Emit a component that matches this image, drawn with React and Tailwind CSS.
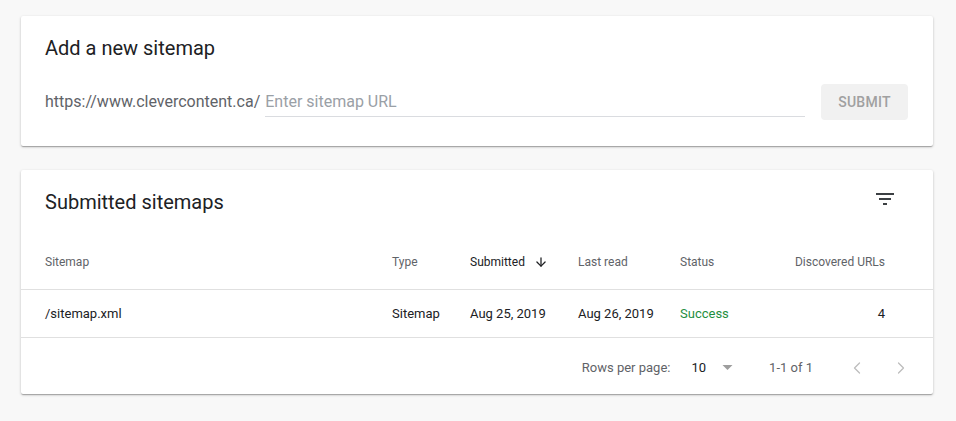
import { ArrowDown, ChevronLeft, ChevronRight } from "lucide-react";

const cardShadow =
  "shadow-[0_1px_3px_0_rgba(0,0,0,0.2),0_1px_1px_0_rgba(0,0,0,0.14),0_2px_1px_-1px_rgba(0,0,0,0.12)]";

export default function App() {
  return (
    <div className="min-h-screen bg-[#f8f8f8] pt-[16px] pb-[26px] font-['Roboto',sans-serif]">
      {/* Add sitemap */}
      <div className={`ml-[21px] w-[912px] rounded-[2px] bg-white ${cardShadow}`}>
        <div className="px-[24px] pt-[18px] pb-[26px]">
          <h2 className="text-[20px] leading-[28px] text-[#202124]">Add a new sitemap</h2>
          <div className="mt-[22px] flex h-[36px] items-center pr-[1px]">
            <span className="text-[16px] leading-[24px] text-[#5f6368]">
              https://www.clevercontent.ca/
            </span>
            <div className="ml-[5px] flex h-[30px] flex-1 items-center border-b border-[#dadce0] pt-[1px]">
              <input
                type="text"
                placeholder="Enter sitemap URL"
                className="w-full bg-transparent text-[16px] leading-[24px] text-[#202124] outline-none placeholder:text-[#9aa0a6]"
              />
            </div>
            <button className="ml-[16px] h-[36px] w-[87px] rounded-[4px] bg-[#f1f1f1] text-[14px] font-medium tracking-[0.25px] text-[#a0a0a0]">
              SUBMIT
            </button>
          </div>
        </div>
      </div>

      {/* Submitted sitemaps */}
      <div className={`ml-[21px] mt-[24px] w-[912px] rounded-[2px] bg-white ${cardShadow}`}>
        <div className="flex h-[64px] items-center justify-between pl-[24px] pr-[36px]">
          <h2 className="text-[20px] leading-[28px] text-[#202124]">Submitted sitemaps</h2>
          <svg viewBox="0 0 24 24" className="-mt-[6px] h-[24px] w-[24px] fill-[#3c4043]">
            <path d="M10 18h4v-2h-4v2zM3 6v2h18V6H3zm3 7h12v-2H6v2z" />
          </svg>
        </div>

        <div className="grid h-[56px] grid-cols-[347px_78px_108px_102px_1fr_auto] items-center border-b border-[#e0e0e0] pl-[24px] pr-[48px] text-[12px] text-[#5f6368]">
          <span>Sitemap</span>
          <span>Type</span>
          <span className="flex items-center gap-[9px] text-[#202124]">
            Submitted
            <ArrowDown size={14} strokeWidth={2.2} className="text-[#202124]" />
          </span>
          <span>Last read</span>
          <span>Status</span>
          <span className="text-right">Discovered URLs</span>
        </div>

        <div className="grid h-[48px] grid-cols-[347px_78px_108px_102px_1fr_auto] items-center border-b border-[#e0e0e0] pl-[24px] pr-[48px] text-[13px] text-[#202124]">
          <span>/sitemap.xml</span>
          <span>Sitemap</span>
          <span>Aug 25, 2019</span>
          <span>Aug 26, 2019</span>
          <span className="text-[#1e8e3e]">Success</span>
          <span className="text-right">4</span>
        </div>

        <div className="flex h-[56px] items-center justify-end pt-[3px] pr-[22px] text-[13px] text-[#5f6368]">
          <span>Rows per page:</span>
          <span className="ml-[21px] text-[#202124]">10</span>
          <svg viewBox="0 0 10 5" className="ml-[16px] h-[5px] w-[11px] fill-[#9e9e9e]">
            <path d="M0 0h10L5 5z" />
          </svg>
          <span className="ml-[36px]">1-1 of 1</span>
          <ChevronLeft size={20} strokeWidth={1.5} className="ml-[34px] text-[#bdbdbd]" />
          <ChevronRight size={20} strokeWidth={1.5} className="ml-[24px] text-[#bdbdbd]" />
        </div>
      </div>
    </div>
  );
}
